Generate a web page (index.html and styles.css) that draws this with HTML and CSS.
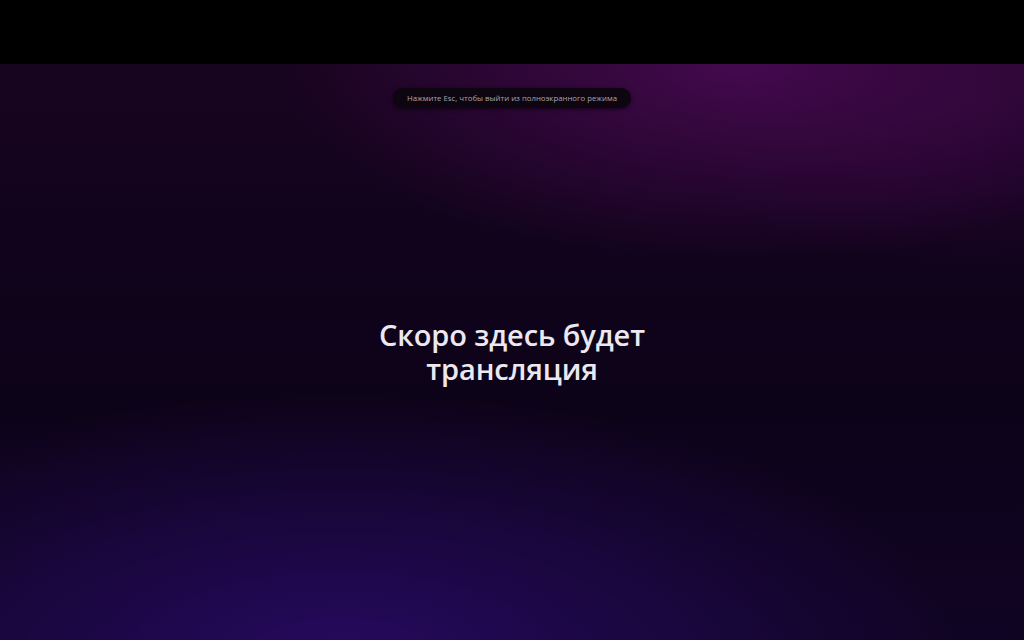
FILE: index.html
```html
<!DOCTYPE html>
<html lang="ru">
<head>
<meta charset="utf-8">
<title>Трансляция</title>
<link rel="stylesheet" href="styles.css">
</head>
<body>
<div class="topbar"></div>
<main class="stage">
  <div class="hint-row">
    <div class="hint">Нажмите Esc, чтобы выйти из полноэкранного режима</div>
  </div>
  <div class="center">
    <h1 class="title">Скоро здесь будет<br>трансляция</h1>
  </div>
</main>
</body>
</html>
```

FILE: styles.css
```css
* { box-sizing: border-box; }
html, body { margin: 0; padding: 0; height: 100%; }
body {
  background: #000;
  font-family: "Open Sans", "Noto Sans", sans-serif;
  display: flex;
  flex-direction: column;
  overflow: hidden;
}
.topbar {
  height: 64px;
  background: #000;
  flex: none;
}
.stage {
  flex: 1;
  display: flex;
  flex-direction: column;
  background:
    radial-gradient(ellipse 460px 200px at 740px 0px, rgba(75, 10, 85, 0.85), rgba(75, 10, 85, 0) 100%),
    radial-gradient(ellipse 620px 260px at 340px 590px, rgba(40, 10, 100, 0.9), rgba(40, 10, 100, 0) 100%),
    radial-gradient(ellipse 300px 180px at 980px 40px, rgba(45, 5, 55, 0.6), rgba(45, 5, 55, 0) 100%),
    linear-gradient(180deg, #18041f 0%, #10031b 35%, #0d0319 60%, #100424 100%);
}
.hint-row {
  display: flex;
  justify-content: center;
  padding-top: 24px;
}
.hint {
  height: 20px;
  width: 238px;
  border-radius: 10px;
  background: #0d0510;
  box-shadow: 0 1px 4px rgba(0, 0, 0, 0.6);
  color: #aaa4ae;
  font-size: 7.8px;
  line-height: 20px;
  text-align: center;
  white-space: nowrap;
}
.center {
  flex: 1;
  display: flex;
  align-items: center;
  justify-content: center;
  padding-bottom: 44px;
}
.title {
  margin: 0;
  color: #ece8f0;
  font-size: 29px;
  font-weight: 600;
  line-height: 34px;
  text-align: center;
  letter-spacing: -0.1px;
}
```
